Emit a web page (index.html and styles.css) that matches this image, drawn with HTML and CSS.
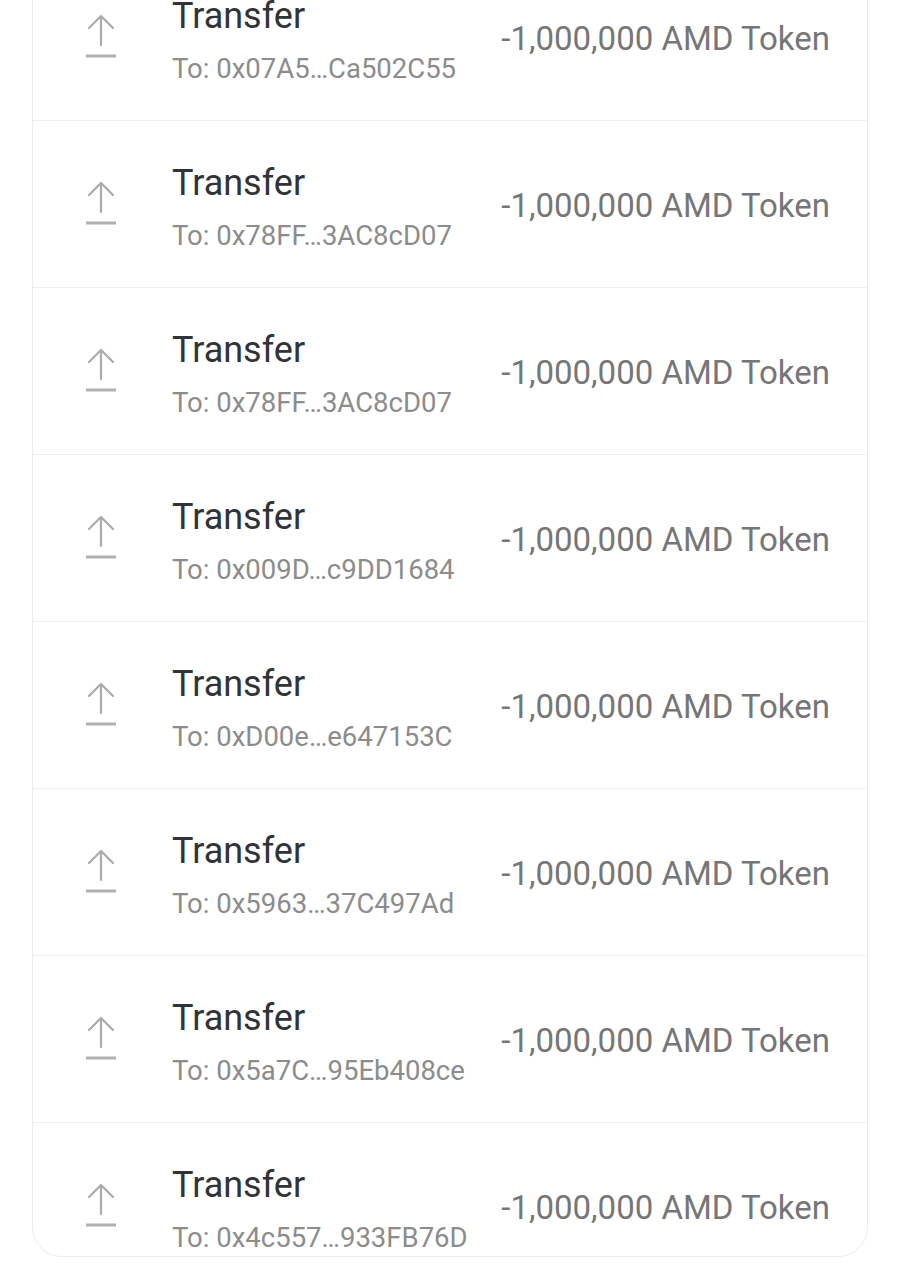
FILE: index.html
```html
<!DOCTYPE html>
<html lang="en">
<head>
  <meta charset="UTF-8">
  <meta name="viewport" content="width=device-width, initial-scale=1.0">
  <title>Transfers</title>
  <link rel="stylesheet" href="styles.css">
</head>
<body>

<div class="page">
  <div class="card">

    <div class="tx">
      <svg class="tx-icon" viewBox="0 0 34 48" width="34" height="48"><path d="M17 4V33M5 16L17 4L29 16" /><path class="bar" d="M2 44H32" /></svg>
      <div class="tx-info">
        <div class="tx-title">Transfer</div>
        <div class="tx-to">To: 0x07A5…Ca502C55</div>
      </div>
      <div class="tx-amount">-1,000,000 AMD Token</div>
    </div>

    <div class="tx">
      <svg class="tx-icon" viewBox="0 0 34 48" width="34" height="48"><path d="M17 4V33M5 16L17 4L29 16" /><path class="bar" d="M2 44H32" /></svg>
      <div class="tx-info">
        <div class="tx-title">Transfer</div>
        <div class="tx-to">To: 0x78FF…3AC8cD07</div>
      </div>
      <div class="tx-amount">-1,000,000 AMD Token</div>
    </div>

    <div class="tx">
      <svg class="tx-icon" viewBox="0 0 34 48" width="34" height="48"><path d="M17 4V33M5 16L17 4L29 16" /><path class="bar" d="M2 44H32" /></svg>
      <div class="tx-info">
        <div class="tx-title">Transfer</div>
        <div class="tx-to">To: 0x78FF…3AC8cD07</div>
      </div>
      <div class="tx-amount">-1,000,000 AMD Token</div>
    </div>

    <div class="tx">
      <svg class="tx-icon" viewBox="0 0 34 48" width="34" height="48"><path d="M17 4V33M5 16L17 4L29 16" /><path class="bar" d="M2 44H32" /></svg>
      <div class="tx-info">
        <div class="tx-title">Transfer</div>
        <div class="tx-to">To: 0x009D…c9DD1684</div>
      </div>
      <div class="tx-amount">-1,000,000 AMD Token</div>
    </div>

    <div class="tx">
      <svg class="tx-icon" viewBox="0 0 34 48" width="34" height="48"><path d="M17 4V33M5 16L17 4L29 16" /><path class="bar" d="M2 44H32" /></svg>
      <div class="tx-info">
        <div class="tx-title">Transfer</div>
        <div class="tx-to">To: 0xD00e…e647153C</div>
      </div>
      <div class="tx-amount">-1,000,000 AMD Token</div>
    </div>

    <div class="tx">
      <svg class="tx-icon" viewBox="0 0 34 48" width="34" height="48"><path d="M17 4V33M5 16L17 4L29 16" /><path class="bar" d="M2 44H32" /></svg>
      <div class="tx-info">
        <div class="tx-title">Transfer</div>
        <div class="tx-to">To: 0x5963…37C497Ad</div>
      </div>
      <div class="tx-amount">-1,000,000 AMD Token</div>
    </div>

    <div class="tx">
      <svg class="tx-icon" viewBox="0 0 34 48" width="34" height="48"><path d="M17 4V33M5 16L17 4L29 16" /><path class="bar" d="M2 44H32" /></svg>
      <div class="tx-info">
        <div class="tx-title">Transfer</div>
        <div class="tx-to">To: 0x5a7C…95Eb408ce</div>
      </div>
      <div class="tx-amount">-1,000,000 AMD Token</div>
    </div>

    <div class="tx last">
      <svg class="tx-icon" viewBox="0 0 34 48" width="34" height="48"><path d="M17 4V33M5 16L17 4L29 16" /><path class="bar" d="M2 44H32" /></svg>
      <div class="tx-info">
        <div class="tx-title">Transfer</div>
        <div class="tx-to">To: 0x4c557…933FB76D</div>
      </div>
      <div class="tx-amount">-1,000,000 AMD Token</div>
    </div>

  </div>
</div>

</body>
</html>
```

FILE: styles.css
```css
body {
  font-family: Roboto, 'Noto Sans', sans-serif;
  background: #fff;
  margin: 0;
}

.page {
  padding: 0 32px;
}

.card {
  margin-top: -47px;
  border: 1px solid #ececec;
  border-radius: 0 0 30px 30px;
  background: #fff;
  overflow: hidden;
}

.tx {
  display: flex;
  align-items: flex-start;
  height: 166px;
  border-bottom: 1px solid #efefef;
  overflow: hidden;
}

.tx.last {
  height: 133px;
  border-bottom: none;
}

.tx-icon {
  flex: none;
  margin: 58px 0 0 51px;
  fill: none;
  stroke: #ababab;
  stroke-width: 2.2;
  stroke-linecap: round;
  stroke-linejoin: round;
}

.tx-icon .bar {
  stroke: #b0b0b0;
  stroke-width: 3;
  stroke-linecap: butt;
}

.tx-info {
  margin: 41px 0 0 54px;
}

.tx-title {
  font-size: 36px;
  line-height: 42px;
  color: #303337;
}

.tx-to {
  margin-top: 16px;
  font-size: 27.5px;
  line-height: 32px;
  color: #8c8c8c;
}

.tx-amount {
  margin: 66px 37px 0 auto;
  font-size: 33px;
  line-height: 38px;
  color: #767676;
  white-space: nowrap;
}
```
